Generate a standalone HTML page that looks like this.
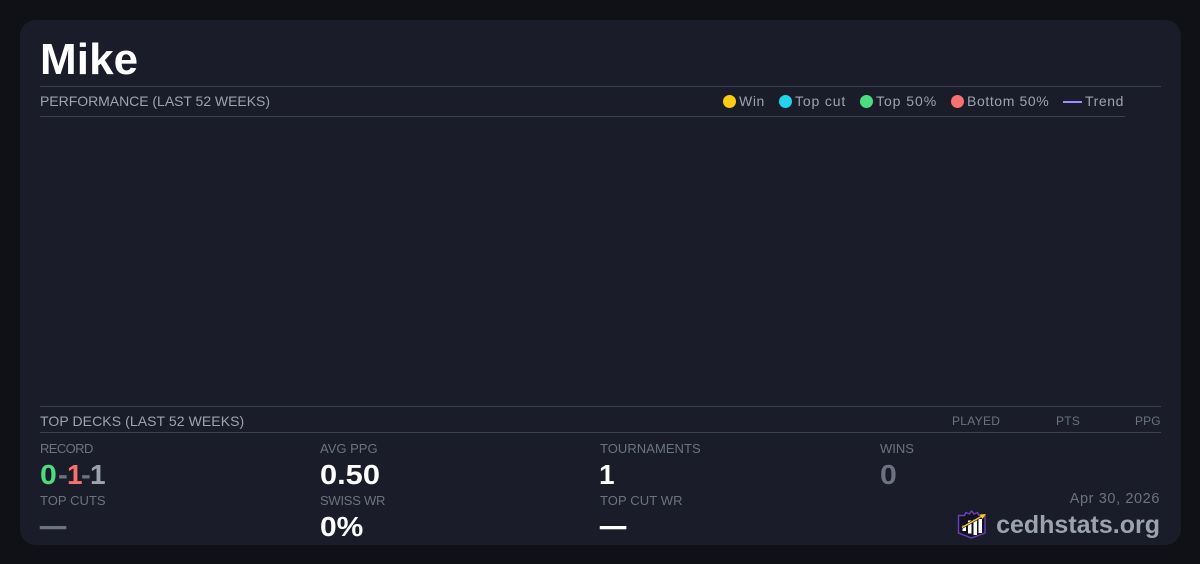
<!DOCTYPE html>
<html><head><meta charset="utf-8">
<style>
html,body{margin:0;padding:0;width:1200px;height:564px;overflow:hidden;background:#0f1117}
body{font-family:"Liberation Sans",sans-serif;position:relative}
.card{position:absolute;left:20px;top:20px;width:1161px;height:525px;background:#1a1d29;border-radius:16px}
.t{position:absolute;white-space:nowrap;line-height:1}
.l{position:absolute;height:1px;background:#374151}
.h{font-size:14px;color:#9ca3af}
.lab{font-size:13px;color:#6b7280}
.v{font-size:28px;font-weight:700;color:#fff;transform-origin:left top}
.c{font-size:12px;color:#6b7280}
.d{position:absolute;width:13px;height:13px;border-radius:50%;top:95px}
.g{font-size:14px;color:#9ca3af;top:94px}
</style></head><body>
<div class="card"></div>
<div class="t" style="left:40px;top:38px;font-size:44px;font-weight:700;color:#fff;letter-spacing:.1px">Mike</div>
<div class="l" style="left:40px;top:86px;width:1121px"></div>
<div class="t h" style="left:40px;top:94px;letter-spacing:-.03px">PERFORMANCE (LAST 52 WEEKS)</div>
<div class="d" style="left:723px;background:#facc15"></div><div class="t g" style="left:739px;letter-spacing:.6px">Win</div>
<div class="d" style="left:779px;background:#22d3ee"></div><div class="t g" style="left:795px;letter-spacing:.85px">Top cut</div>
<div class="d" style="left:860px;background:#4ade80"></div><div class="t g" style="left:876px;letter-spacing:.95px">Top 50%</div>
<div class="d" style="left:951px;background:#f87171"></div><div class="t g" style="left:967px;letter-spacing:.6px">Bottom 50%</div>
<div class="l" style="left:1063px;top:101px;width:19px;height:2px;background:#a78bfa"></div><div class="t g" style="left:1085px;letter-spacing:.6px">Trend</div>
<div class="l" style="left:40px;top:116px;width:1085px"></div>
<div class="l" style="left:40px;top:406px;width:1121px"></div>
<div class="t h" style="left:40px;top:414px;letter-spacing:.08px">TOP DECKS (LAST 52 WEEKS)</div>
<div class="t c" style="left:952px;top:415px;letter-spacing:.3px">PLAYED</div>
<div class="t c" style="left:1056px;top:415px;letter-spacing:.3px">PTS</div>
<div class="t c" style="left:1135px;top:415px;letter-spacing:.1px">PPG</div>
<div class="l" style="left:40px;top:432px;width:1121px"></div>

<div class="t lab" style="left:40px;top:442px;letter-spacing:-.6px">RECORD</div>
<div class="t v" style="left:40px;top:461px;color:#4ade80;transform:scaleX(1.08)">0</div>
<div class="t v" style="left:58px;top:461px;color:#6b7280;transform:scaleX(1.05)">-</div>
<div class="t v" style="left:67px;top:461px;color:#f87171">1</div>
<div class="t v" style="left:81px;top:461px;color:#6b7280;transform:scaleX(1.05)">-</div>
<div class="t v" style="left:90px;top:461px;color:#9ca3af">1</div>
<div class="t lab" style="left:320px;top:442px">AVG PPG</div>
<div class="t v" style="left:320px;top:461px;transform:scaleX(1.1)">0.50</div>
<div class="t lab" style="left:600px;top:442px;letter-spacing:.05px">TOURNAMENTS</div>
<div class="t v" style="left:599px;top:461px">1</div>
<div class="t lab" style="left:880px;top:442px">WINS</div>
<div class="t v" style="left:880px;top:461px;color:#6b7280;transform:scaleX(1.08)">0</div>

<div class="t lab" style="left:40px;top:494px;letter-spacing:.05px">TOP CUTS</div>
<div class="t v" style="left:40px;top:512px;color:#6b7280;transform:scaleX(.93);-webkit-text-stroke:.5px #6b7280">—</div>
<div class="t lab" style="left:320px;top:494px;letter-spacing:-.25px">SWISS WR</div>
<div class="t v" style="left:320px;top:513px;transform:scaleX(1.07)">0%</div>
<div class="t lab" style="left:600px;top:494px;letter-spacing:.1px">TOP CUT WR</div>
<div class="t v" style="left:600px;top:512px;transform:scaleX(.93);-webkit-text-stroke:.5px #fff">—</div>

<div class="t" style="right:40px;top:492px;font-size:14.5px;color:#6b7280;letter-spacing:.6px">Apr 30, 2026</div>
<div class="t" style="right:40px;top:513px;font-size:25px;font-weight:700;color:#9ca3af">cedhstats.org</div>
<svg style="position:absolute;left:956px;top:508px" width="32" height="32" viewBox="0 0 32 32">
<path d="M2.5 7.5H8.5L10 4.5L13.5 6L15.5 3L18 6L21.5 4.5L23 7.5H29V25L15.5 30L2.5 25Z" fill="#14121f" stroke="#6d3fc4" stroke-width="1.4" stroke-linejoin="round"/>
<rect x="6.5" y="17" width="3.5" height="6" fill="#fff"/>
<rect x="12" y="12.5" width="3.5" height="13" fill="#fff"/>
<rect x="17.5" y="11" width="3.5" height="16" fill="#fff"/>
<rect x="22.5" y="11" width="3.5" height="14" fill="#fff"/>
<path d="M6 19.5L27 7.5" stroke="#14121f" stroke-width="2.6"/>
<path d="M6 19.5L27 7.5" stroke="#facc15" stroke-width="1.4"/>
<path d="M30 6L23.5 6.5L26.5 11Z" fill="#facc15"/>
</svg>
</body></html>
